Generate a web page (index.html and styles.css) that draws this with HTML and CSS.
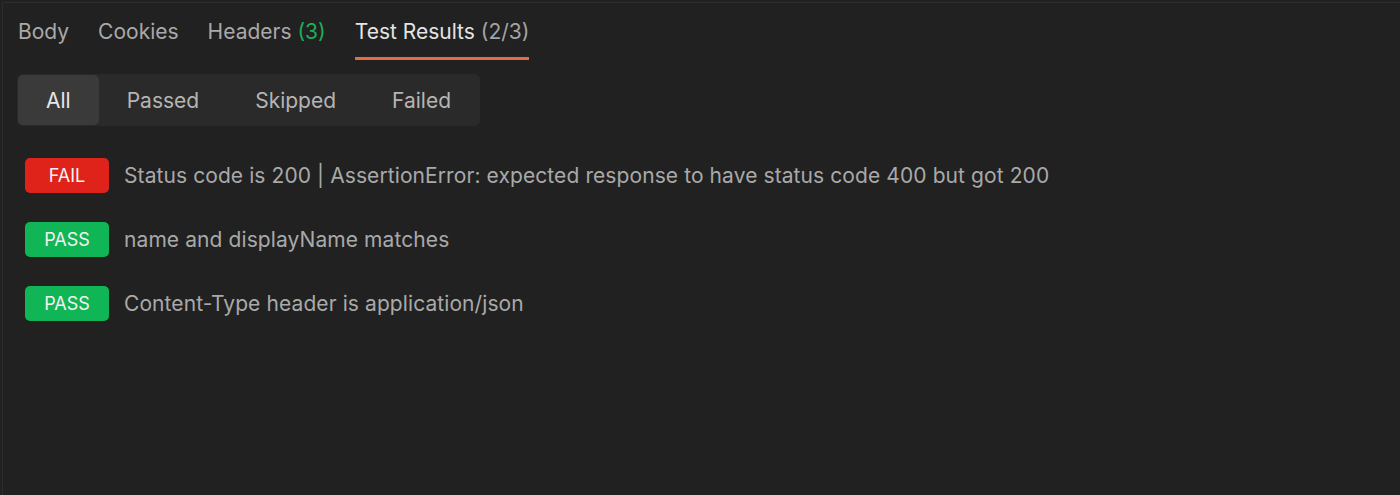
FILE: index.html
```html
<!DOCTYPE html>
<html>
<head>
<meta charset="utf-8">
<link rel="stylesheet" href="styles.css">
</head>
<body>
<div class="panel">
  <nav class="tabs">
    <div class="tab"><span>Body</span></div>
    <div class="tab"><span>Cookies</span></div>
    <div class="tab"><span>Headers <span class="count-green">(3)</span></span></div>
    <div class="tab active"><span>Test Results <span class="count">(2/3)</span></span></div>
  </nav>
  <div class="filters">
    <div class="seg">
      <div class="seg-item on">All</div>
      <div class="seg-item">Passed</div>
      <div class="seg-item">Skipped</div>
      <div class="seg-item">Failed</div>
    </div>
  </div>
  <div class="results">
    <div class="row"><span class="badge fail">FAIL</span><span class="msg">Status code is 200 | AssertionError: expected response to have status code 400 but got 200</span></div>
    <div class="row"><span class="badge pass">PASS</span><span class="msg">name and displayName matches</span></div>
    <div class="row"><span class="badge pass">PASS</span><span class="msg">Content-Type header is application/json</span></div>
  </div>
</div>
</body>
</html>
```
FILE: styles.css
```css
html, body {
  margin: 0;
  padding: 0;
  background: #212121;
  height: 100%;
}
body {
  font-family: Inter, "Noto Sans", sans-serif;
  color: #a6a6a6;
  padding: 2px 0 0 2px;
  box-sizing: border-box;
  overflow: hidden;
}
.panel {
  border-top: 1px solid #2d2d2d;
  border-left: 1px solid #2d2d2d;
  height: 100%;
  box-sizing: border-box;
}
.tabs {
  display: flex;
  gap: 29px;
  padding-left: 15px;
  height: 57px;
  align-items: stretch;
}
.tab {
  font-size: 21px;
  line-height: 1;
  display: flex;
  align-items: center;
  padding-top: 2px;
  border-bottom: 3px solid transparent;
  color: #a9a9a9;
}
.tab.active {
  color: #e4e4e4;
  border-bottom-color: #e36c47;
}
.count-green { color: #1eae5a; }
.count { color: #a4a4a4; }
.filters {
  padding: 14px 0 0 14px;
}
.seg {
  display: inline-flex;
  background: #2a2a2a;
  border-radius: 6px;
  height: 52px;
  padding: 1px;
  box-sizing: border-box;
}
.seg-item {
  font-size: 21px;
  display: flex;
  align-items: center;
  padding: 0 28px;
  color: #b5b5b5;
  border-radius: 5px;
}
.seg-item.on {
  background: #3a3a3a;
  color: #e6e6e6;
}
.results {
  padding: 32px 0 0 22px;
  display: flex;
  flex-direction: column;
  gap: 29px;
}
.row {
  display: flex;
  align-items: center;
  gap: 15px;
  height: 35px;
}
.badge {
  width: 84px;
  height: 35px;
  border-radius: 5px;
  display: flex;
  align-items: center;
  justify-content: center;
  font-size: 18px;
  color: #f2f2f2;
}
.badge.fail { background: #e0231a; }
.badge.pass { background: #10b656; }
.msg {
  font-size: 21px;
  letter-spacing: 0.09px;
  color: #a9a9a9;
}
```
